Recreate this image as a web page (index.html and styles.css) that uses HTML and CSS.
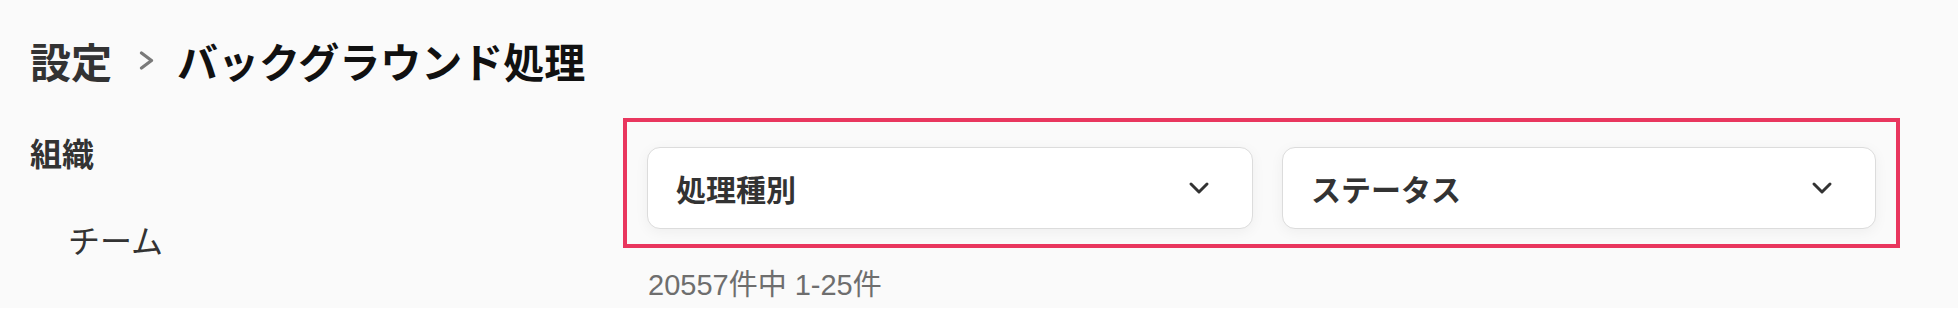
FILE: index.html
```html
<!DOCTYPE html>
<html lang="ja">
<head>
<meta charset="utf-8">
<title>設定 - バックグラウンド処理</title>
<link rel="stylesheet" href="styles.css">
</head>
<body>
<div class="page">
  <h1 class="title">
    <span class="crumb">設定</span>
    <svg class="crumb-sep" width="15" height="19" viewBox="0 0 15 19" aria-hidden="true"><polyline points="2.5,2 12.5,9.5 2.5,17" fill="none" stroke="#7a7a7a" stroke-width="3.2" stroke-linecap="round" stroke-linejoin="round"/></svg>
    <span class="current">バックグラウンド処理</span>
  </h1>
  <div class="body">
    <nav class="sidebar">
      <div class="nav-group">組織</div>
      <div class="nav-item">チーム</div>
    </nav>
    <main class="main">
      <div class="filters">
        <div class="select select-a">
          <span class="select-label">処理種別</span>
          <svg class="chev" width="22" height="14" viewBox="0 0 22 14" aria-hidden="true"><polyline points="3,3 11,11 19,3" fill="none" stroke="#333" stroke-width="3" stroke-linecap="round" stroke-linejoin="round"/></svg>
        </div>
        <div class="select select-b">
          <span class="select-label">ステータス</span>
          <svg class="chev" width="22" height="14" viewBox="0 0 22 14" aria-hidden="true"><polyline points="3,3 11,11 19,3" fill="none" stroke="#333" stroke-width="3" stroke-linecap="round" stroke-linejoin="round"/></svg>
        </div>
      </div>
      <div class="count">20557件中 1-25件</div>
    </main>
  </div>
</div>
</body>
</html>
```

FILE: styles.css
```css
html, body {
  margin: 0;
  padding: 0;
  background: #ffffff;
}
body {
  font-family: "Noto Sans CJK JP", "Noto Sans", sans-serif;
  color: #333;
}
.page {
  box-sizing: border-box;
  height: 308px;
  background: #fafafa;
  padding: 40px 0 0 30px;
  overflow: hidden;
}
.title {
  margin: 0;
  display: flex;
  align-items: center;
  font-size: 41px;
  line-height: 40px;
  font-weight: 700;
  height: 40px;
}
.crumb {
  color: #333;
}
.crumb-sep {
  margin: 0 23px 0 27px;
  flex: none;
}
.current {
  color: #111;
}
.body {
  display: flex;
  margin-top: 38px;
}
.sidebar {
  width: 593px;
  flex: none;
  padding-top: 18px;
}
.nav-group {
  font-size: 32px;
  line-height: 32px;
  font-weight: 700;
  color: #333;
}
.nav-item {
  margin-top: 55px;
  padding-left: 38px;
  font-size: 32px;
  line-height: 32px;
  color: #333;
}
.main {
  width: 1277px;
  flex: none;
}
.filters {
  box-sizing: border-box;
  height: 130px;
  border: 4px solid #e9365e;
  padding: 25px 20px 15px 20px;
  display: grid;
  grid-template-columns: 606px 594px;
  column-gap: 29px;
}
.select {
  box-sizing: border-box;
  height: 82px;
  background: #ffffff;
  border: 1px solid #dcdcdc;
  border-radius: 13px;
  box-shadow: 0 3px 14px rgba(0, 0, 0, 0.05);
  display: flex;
  align-items: center;
  justify-content: space-between;
  padding: 0 42px 0 28px;
}
.select-label {
  font-size: 30px;
  line-height: 30px;
  font-weight: 700;
  color: #333;
}
.chev {
  flex: none;
}
.count {
  margin-top: 22px;
  padding-left: 25px;
  font-family: "Liberation Sans", "Noto Sans CJK JP", sans-serif;
  font-size: 29px;
  line-height: 30px;
  color: #6e6e6e;
}
```
